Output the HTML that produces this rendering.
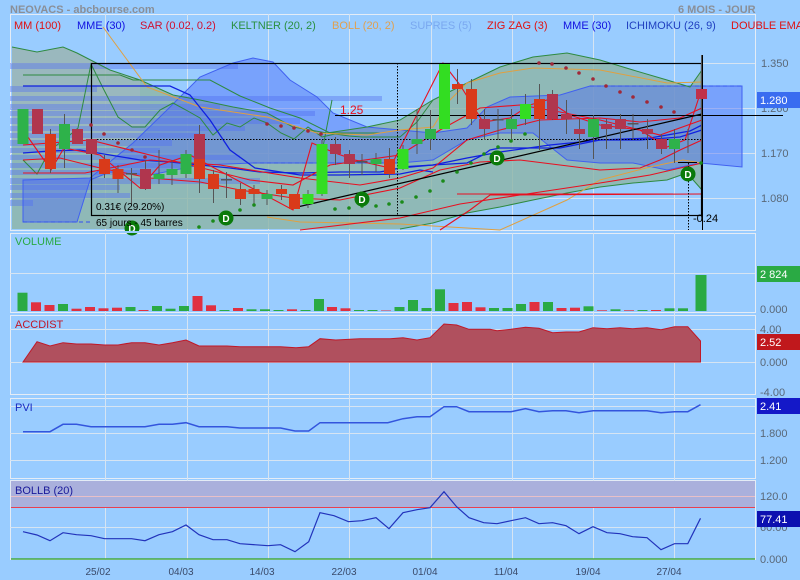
<!DOCTYPE html>
<html><head><meta charset="utf-8"><style>
html,body{margin:0;padding:0;background:#99ccff;}
svg{display:block;font-family:"Liberation Sans",sans-serif;}
</style></head><body>
<svg width="800" height="580" viewBox="0 0 800 580" xmlns="http://www.w3.org/2000/svg">
<rect width="800" height="580" fill="#99ccff"/>
<g fill="none" stroke="#e4ecf6" stroke-width="1">
<rect x="10.5" y="14.5" width="745" height="216"/>
<rect x="10.5" y="233.5" width="745" height="79"/>
<rect x="10.5" y="315.5" width="745" height="79"/>
<rect x="10.5" y="398.5" width="745" height="80"/>
<rect x="10.5" y="480.5" width="745" height="79"/>
</g>
<g stroke="#d6e4f2" stroke-width="1">
<line x1="10" y1="63.5" x2="755" y2="63.5"/><line x1="10" y1="108.5" x2="755" y2="108.5"/>
<line x1="10" y1="153.5" x2="755" y2="153.5"/><line x1="10" y1="198.5" x2="755" y2="198.5"/>
<line x1="10" y1="273.5" x2="755" y2="273.5"/>
<line x1="10" y1="329.5" x2="755" y2="329.5"/><line x1="10" y1="362.5" x2="755" y2="362.5"/>
<line x1="10" y1="406.5" x2="755" y2="406.5"/><line x1="10" y1="433.5" x2="755" y2="433.5"/><line x1="10" y1="460.5" x2="755" y2="460.5"/>
<line x1="10" y1="527.5" x2="755" y2="527.5"/>
<line x1="105.5" y1="14" x2="105.5" y2="560"/><line x1="187.5" y1="14" x2="187.5" y2="560"/>
<line x1="268.5" y1="14" x2="268.5" y2="560"/><line x1="349.5" y1="14" x2="349.5" y2="560"/>
<line x1="431.5" y1="14" x2="431.5" y2="560"/><line x1="512.5" y1="14" x2="512.5" y2="560"/>
<line x1="593.5" y1="14" x2="593.5" y2="560"/><line x1="674.5" y1="14" x2="674.5" y2="560"/>
</g>

<polygon fill="rgb(140,180,165)" fill-opacity="0.8" points="12,47 37,52 63,47 77,53 110,70 140,80 173,95 200,100 233,107 267,113 293,127 327,133 367,127 400,120 433,100 467,83 500,67 533,57 567,53 600,60 633,70 667,80 690,87 702,70 702,190 687,173 667,180 633,183 600,187 567,193 533,200 500,207 467,213 433,223 400,229 300,229 12,229"/>
<polygon fill="#a8b8c8" fill-opacity="0.45" points="12,47 37,52 63,47 77,53 110,70 140,80 140,140 12,140"/>
<g fill="#5a78ee" fill-opacity="0.45">
<rect x="10" y="63" width="228" height="6"/><rect x="10" y="86" width="87" height="6"/>
<rect x="10" y="96" width="372" height="5"/><rect x="10" y="104" width="210" height="6"/>
<rect x="10" y="111" width="305" height="5"/><rect x="10" y="118" width="290" height="6"/>
<rect x="10" y="126" width="235" height="5"/><rect x="10" y="133" width="190" height="5"/>
<rect x="10" y="140" width="162" height="6"/><rect x="10" y="148" width="150" height="5"/>
<rect x="10" y="155" width="230" height="5"/><rect x="10" y="163" width="170" height="5"/>
<rect x="10" y="170" width="135" height="5"/><rect x="10" y="178" width="250" height="6"/>
<rect x="10" y="185" width="110" height="5"/><rect x="10" y="193" width="120" height="5"/>
<rect x="10" y="200" width="23" height="6"/>
</g>
<polygon fill="#4a68f8" fill-opacity="0.42" stroke="#4060f0" stroke-width="1" points="90,178 133,143 167,110 200,77 233,63 253,58 273,62 290,80 317,97 333,113 367,127 400,130 433,133 467,128 487,107 510,97 560,95 590,86 742,86 742,167 700,163 667,170 633,163 600,163 567,160 533,133 500,133 467,140 433,160 400,163 253,163 200,165 150,175 110,172 90,180 77,222 23,222 23,180"/>
<line x1="590" y1="86" x2="742" y2="86" stroke="#3050f0" stroke-dasharray="4,3"/>
<line x1="23" y1="222" x2="90" y2="222" stroke="#3050f0" stroke-dasharray="4,3"/>
<line x1="253" y1="163" x2="400" y2="163" stroke="#3050f0" stroke-dasharray="4,3"/>

<g fill="none" stroke="#2e8a40" stroke-width="1">
<polyline points="12,47 37,52 63,47 77,53 110,70 140,80 173,95 200,100 233,107 267,113 293,127 327,133 367,127 400,120 433,100 467,83 500,67 533,57 567,53 600,60 633,70 667,80 690,87 702,70"/>
<polyline points="702,190 687,173 667,180 633,183 600,187 567,193 533,200 500,207 467,213 433,223 400,229"/>
<polyline points="23,160 37,174 50,150 64,140 78,128 91,64 104,90 118,117 132,127 145,127 160,110 173,103 186,110 200,118 213,135 227,123 240,127 254,118 267,123 281,133 294,139 308,127 322,137 335,134 349,136 362,137 375,137 400,137 417,122 433,100"/>
<polyline points="23,75 120,75 133,80 210,80 240,96 270,108 300,118 330,133 380,133"/>
<polyline points="322,152 332,100"/>
</g>
<g fill="none" stroke="#e0a040" stroke-width="1">
<polyline points="103,27 147,87 200,107 267,117 317,133 367,135 400,130 433,127 450,100 467,83 500,73 533,68 600,70 667,83 702,82"/>
<polyline points="267,217 300,222 400,224 500,230 567,200 600,180 650,167 683,160 702,163"/>
</g>
<g fill="none" stroke="#1020e0" stroke-width="1.3">
<polyline points="23,153 50,151 80,150 110,155 140,160 170,162 200,165 230,168 260,172 300,173 340,172 380,172 400,168 433,165 467,158 500,152 550,145 600,140 650,138 690,131 702,125"/>
<polyline points="23,86 170,86 190,95 210,120 230,150 255,168 300,175 340,175 400,174 420,170 433,172"/>
<polyline points="400,167 433,165 467,163 483,155 490,150 500,148 560,148 600,140 640,140 680,137 702,130"/>
</g>
<g fill="none" stroke="#e81020" stroke-width="1.1">
<polyline points="23,173 85,173 150,160 220,165 300,178 360,185 400,178 433,168 467,140 500,130 540,120 600,118 640,122 680,118 702,108"/>
<polyline points="23,130 51,170 64,148 100,155 140,188 160,165 190,155 293,210 312,143 335,153 355,160 390,168 443,63 460,85 483,122 510,118 530,105 547,100 570,115 600,125 640,130 667,147 685,140 702,88"/>
<polyline points="23,145 90,140 150,155 250,180 293,185 330,165 400,155 440,130 480,108 520,105 560,112 600,120 660,135 702,120"/>
<polyline points="457,194 673,194"/>
<polyline points="23,160 60,158 100,168 150,178 200,182 240,190 293,198 340,200 400,188 440,170 480,162 520,160 560,165 600,170 640,168 660,160 680,150 702,140"/>
<polyline points="300,230 400,218 460,204 520,195 600,183 650,175 702,163"/>
<polyline points="440,230 470,210 490,195 702,194"/>
</g>
<rect x="91.5" y="63.5" width="610" height="152" fill="none" stroke="#000" stroke-width="1.2"/>
<line x1="91" y1="139.5" x2="702" y2="139.5" stroke="#000" stroke-dasharray="1.5,1.5"/>
<line x1="397.5" y1="63" x2="397.5" y2="215" stroke="#000" stroke-dasharray="1.5,1.5"/>
<line x1="293" y1="208" x2="702" y2="114" stroke="#000" stroke-width="1.2"/>
<line x1="335" y1="115.5" x2="783" y2="115.5" stroke="#000" stroke-width="1"/>
<line x1="678" y1="162.5" x2="697" y2="162.5" stroke="#000"/>
<line x1="688.5" y1="163" x2="688.5" y2="230" stroke="#000" stroke-dasharray="1.5,1.5"/>
<line x1="702.5" y1="55" x2="702.5" y2="230" stroke="#000" stroke-width="1"/>

<g stroke="#555" stroke-width="1">
<line x1="50.5" y1="129" x2="50.5" y2="173"/><line x1="64.5" y1="114" x2="64.5" y2="168"/>
<line x1="104.5" y1="155" x2="104.5" y2="178"/><line x1="118" y1="165" x2="118" y2="193"/>
<line x1="131.5" y1="168" x2="131.5" y2="204"/><line x1="145.5" y1="160" x2="145.5" y2="190"/>
<line x1="159" y1="150" x2="159" y2="184"/><line x1="172" y1="160" x2="172" y2="185"/>
<line x1="186" y1="150" x2="186" y2="178"/><line x1="199.5" y1="125" x2="199.5" y2="193"/>
<line x1="213.5" y1="170" x2="213.5" y2="203"/><line x1="226.5" y1="172" x2="226.5" y2="198"/>
<line x1="240.5" y1="183" x2="240.5" y2="205"/><line x1="254" y1="185" x2="254" y2="205"/>
<line x1="267" y1="190" x2="267" y2="205"/><line x1="281.5" y1="185" x2="281.5" y2="200"/>
<line x1="308" y1="190" x2="308" y2="208"/><line x1="322" y1="140" x2="322" y2="196"/>
<line x1="335.5" y1="137" x2="335.5" y2="165"/><line x1="349.5" y1="150" x2="349.5" y2="178"/>
<line x1="362" y1="154" x2="362" y2="175"/><line x1="376" y1="153" x2="376" y2="172"/>
<line x1="389.5" y1="148" x2="389.5" y2="178"/><line x1="403" y1="145" x2="403" y2="170"/>
<line x1="417" y1="109" x2="417" y2="154"/><line x1="430.5" y1="110" x2="430.5" y2="150"/>
<line x1="457.5" y1="69" x2="457.5" y2="104"/><line x1="471.5" y1="79" x2="471.5" y2="125"/>
<line x1="484.5" y1="109" x2="484.5" y2="140"/><line x1="498" y1="109" x2="498" y2="140"/>
<line x1="511.5" y1="109" x2="511.5" y2="140"/><line x1="525.5" y1="94" x2="525.5" y2="125"/>
<line x1="539.5" y1="84" x2="539.5" y2="150"/><line x1="552.5" y1="90" x2="552.5" y2="120"/>
<line x1="566.5" y1="100" x2="566.5" y2="134"/><line x1="579.5" y1="119" x2="579.5" y2="149"/>
<line x1="593.5" y1="115" x2="593.5" y2="159"/><line x1="606.5" y1="119" x2="606.5" y2="149"/>
<line x1="620.5" y1="114" x2="620.5" y2="149"/><line x1="633" y1="114" x2="633" y2="140"/>
<line x1="647.5" y1="119" x2="647.5" y2="149"/><line x1="661.5" y1="134" x2="661.5" y2="154"/>
<line x1="674.5" y1="129" x2="674.5" y2="163"/><line x1="688" y1="129" x2="688" y2="153"/>
<line x1="701.5" y1="55" x2="701.5" y2="163"/>
</g>
<g stroke="none">
<rect x="17.5" y="109" width="11" height="35" fill="#2eb24a"/>
<rect x="32" y="109" width="11" height="25" fill="#b0364e"/>
<rect x="45" y="134" width="11" height="35" fill="#d93a1a"/>
<rect x="59" y="124" width="11" height="25" fill="#2eb24a"/>
<rect x="72" y="129" width="11" height="15" fill="#b0364e"/>
<rect x="86" y="139" width="11" height="15" fill="#b0364e"/>
<rect x="99" y="159" width="11" height="15" fill="#d93a1a"/>
<rect x="112.5" y="169" width="11" height="10" fill="#d93a1a"/>
<rect x="126" y="173" width="11" height="1.5" fill="#555"/>
<rect x="140" y="169" width="11" height="20" fill="#b0364e"/>
<rect x="153.5" y="174" width="11" height="5" fill="#2eb24a"/>
<rect x="166.5" y="169" width="11" height="6" fill="#2eb24a"/>
<rect x="180.5" y="154" width="11" height="20" fill="#2eb24a"/>
<rect x="194" y="134" width="11" height="25" fill="#b0364e"/>
<rect x="194" y="159" width="11" height="20" fill="#d93a1a"/>
<rect x="208" y="174" width="11" height="15" fill="#d93a1a"/>
<rect x="221" y="179" width="11" height="1.5" fill="#555"/>
<rect x="235" y="189" width="11" height="10" fill="#d93a1a"/>
<rect x="248.5" y="189" width="11" height="5" fill="#d93a1a"/>
<rect x="261.5" y="194" width="11" height="5" fill="#2eb24a"/>
<rect x="276" y="189" width="11" height="5" fill="#d93a1a"/>
<rect x="289" y="194" width="11" height="15" fill="#d93a1a"/>
<rect x="302.5" y="194" width="11" height="10" fill="#33dd22"/>
<rect x="316.5" y="144" width="11" height="50" fill="#33dd22"/>
<rect x="330" y="144" width="11" height="10" fill="#b0364e"/>
<rect x="344" y="154" width="11" height="10" fill="#b0364e"/>
<rect x="356.5" y="161" width="11" height="1.5" fill="#555"/>
<rect x="370.5" y="159" width="11" height="5" fill="#2eb24a"/>
<rect x="384" y="159" width="11" height="15" fill="#d93a1a"/>
<rect x="397.5" y="149" width="11" height="20" fill="#33dd22"/>
<rect x="411.5" y="139" width="11" height="5" fill="#2eb24a"/>
<rect x="425" y="129" width="11" height="10" fill="#2eb24a"/>
<rect x="439" y="64" width="11" height="65" fill="#33dd22"/>
<rect x="452" y="84" width="11" height="5" fill="#d93a1a"/>
<rect x="466" y="89" width="11" height="30" fill="#d93a1a"/>
<rect x="479" y="119" width="11" height="10" fill="#b0364e"/>
<rect x="492.5" y="119" width="11" height="1.5" fill="#555"/>
<rect x="506" y="119" width="11" height="10" fill="#2eb24a"/>
<rect x="520" y="104" width="11" height="15" fill="#33dd22"/>
<rect x="534" y="99" width="11" height="20" fill="#d93a1a"/>
<rect x="547" y="94" width="11" height="25" fill="#b0364e"/>
<rect x="561" y="114" width="11" height="5" fill="#b0364e"/>
<rect x="574" y="129" width="11" height="5" fill="#b0364e"/>
<rect x="588" y="119" width="11" height="18" fill="#2eb24a"/>
<rect x="601" y="124" width="11" height="5" fill="#b0364e"/>
<rect x="615" y="119" width="11" height="10" fill="#b0364e"/>
<rect x="627.5" y="123" width="11" height="1.5" fill="#555"/>
<rect x="642" y="129" width="11" height="5" fill="#b0364e"/>
<rect x="656" y="139" width="11" height="10" fill="#b0364e"/>
<rect x="669" y="139" width="11" height="10" fill="#2eb24a"/>
<rect x="696" y="89" width="11" height="10" fill="#c0304a"/>
</g>
<g fill="#a02838">
<circle cx="91" cy="125" r="1.8"/><circle cx="104" cy="134" r="1.8"/><circle cx="118" cy="143" r="1.8"/><circle cx="132" cy="150" r="1.8"/><circle cx="145" cy="157" r="1.8"/>
<circle cx="267" cy="124" r="1.8"/><circle cx="281" cy="126" r="1.8"/><circle cx="294" cy="128" r="1.8"/><circle cx="308" cy="131" r="1.8"/><circle cx="321" cy="134" r="1.8"/>
<circle cx="539" cy="63" r="1.8"/><circle cx="552" cy="64" r="1.8"/><circle cx="566" cy="68" r="1.8"/><circle cx="579" cy="73" r="1.8"/><circle cx="593" cy="79" r="1.8"/><circle cx="606" cy="86" r="1.8"/><circle cx="620" cy="92" r="1.8"/><circle cx="633" cy="97" r="1.8"/><circle cx="647" cy="102" r="1.8"/><circle cx="661" cy="107" r="1.8"/><circle cx="674" cy="112" r="1.8"/>
</g>
<g fill="#1a8a1a">
<circle cx="199" cy="227" r="1.8"/><circle cx="213" cy="221" r="1.8"/><circle cx="240" cy="210" r="1.8"/><circle cx="254" cy="205" r="1.8"/>
<circle cx="335" cy="209" r="1.8"/><circle cx="349" cy="208" r="1.8"/><circle cx="362" cy="206" r="1.8"/><circle cx="376" cy="206" r="1.8"/><circle cx="389" cy="204" r="1.8"/><circle cx="402" cy="202" r="1.8"/><circle cx="416" cy="197" r="1.8"/><circle cx="430" cy="191" r="1.8"/><circle cx="443" cy="181" r="1.8"/><circle cx="457" cy="172" r="1.8"/><circle cx="471" cy="163" r="1.8"/><circle cx="484" cy="154" r="1.8"/><circle cx="498" cy="147" r="1.8"/><circle cx="511" cy="141" r="1.8"/><circle cx="525" cy="134" r="1.8"/><circle cx="701" cy="163" r="1.8"/>
</g>
<g font-size="10" font-weight="bold" text-anchor="middle">
<circle cx="226" cy="218" r="7.5" fill="#0a7a0a"/><text x="226" y="222" fill="#fff">D</text>
<circle cx="132" cy="228" r="7.5" fill="#0a7a0a"/><text x="132" y="232" fill="#fff">D</text>
<circle cx="362" cy="199" r="7.5" fill="#0a7a0a"/><text x="362" y="203" fill="#fff">D</text>
<circle cx="497" cy="158" r="7.5" fill="#0a7a0a"/><text x="497" y="162" fill="#fff">D</text>
<circle cx="688" cy="174" r="7.5" fill="#0a7a0a"/><text x="688" y="178" fill="#fff">D</text>
</g>
<rect x="10" y="231" width="746" height="2" fill="#99ccff"/>
<text x="340" y="114" font-size="12" fill="#e81020">1.25</text>
<text x="96" y="210" font-size="10" fill="#000">0.31€ (29.20%)</text>
<text x="96" y="226" font-size="10" fill="#000">65 jours - 45 barres</text>
<text x="693" y="222" font-size="11" fill="#000">-0.24</text>

<text x="10" y="13" font-size="11" font-weight="bold" fill="#8a8f98">NEOVACS - abcbourse.com</text>
<text x="678" y="13" font-size="11" font-weight="bold" fill="#8a8f98">6 MOIS - JOUR</text>
<g font-size="11">
<text x="14" y="29" fill="#e01010">MM (100)</text>
<text x="77" y="29" fill="#1010e0">MME (30)</text>
<text x="140" y="29" fill="#d01030">SAR (0.02, 0.2)</text>
<text x="231" y="29" fill="#2a9040">KELTNER (20, 2)</text>
<text x="332" y="29" fill="#e0a050">BOLL (20, 2)</text>
<text x="410" y="29" fill="#7aa8f0">SUPRES (5)</text>
<text x="487" y="29" fill="#e01010">ZIG ZAG (3)</text>
<text x="563" y="29" fill="#1010e0">MME (30)</text>
<text x="626" y="29" fill="#2040c0">ICHIMOKU (26, 9)</text>
<text x="731" y="29" fill="#e01010">DOUBLE EMA</text>
</g>
<g font-size="11" fill="#5a6878">
<text x="761" y="67">1.350</text><text x="761" y="112">1.260</text>
<text x="761" y="157">1.170</text><text x="761" y="202">1.080</text>
<text x="760" y="313">0.000</text>
<text x="760" y="333">4.00</text><text x="760" y="366">0.000</text><text x="760" y="396">-4.00</text>
<text x="760" y="437">1.800</text><text x="760" y="464">1.200</text>
<text x="760" y="500">120.0</text><text x="760" y="531">60.00</text><text x="760" y="563">0.000</text>
</g>
<rect x="757" y="92" width="43" height="16" fill="#3a6cf0"/><text x="760" y="104" font-size="11" fill="#fff">1.280</text>
<rect x="757" y="266" width="43" height="16" fill="#2aaa44"/><text x="760" y="278" font-size="11" fill="#fff">2 824</text>
<rect x="757" y="334" width="43" height="16" fill="#c0181c"/><text x="760" y="346" font-size="11" fill="#fff">2.52</text>
<rect x="757" y="398" width="43" height="16" fill="#1418c8"/><text x="760" y="410" font-size="11" fill="#fff">2.41</text>
<rect x="757" y="511" width="43" height="16" fill="#0c10b0"/><text x="760" y="523" font-size="11" fill="#fff">77.41</text>

<text x="15" y="245" font-size="11" fill="#2aaa44">VOLUME</text>
<g>
<rect x="17.5" y="292.7" width="10" height="18.3" fill="#2aaa44"/>
<rect x="31" y="302.3" width="10" height="8.7" fill="#e03040"/>
<rect x="44.5" y="305" width="10" height="6" fill="#e03040"/>
<rect x="58" y="304" width="10" height="7" fill="#2aaa44"/>
<rect x="71.5" y="308.7" width="10" height="2.3" fill="#e03040"/>
<rect x="85" y="307" width="10" height="4" fill="#e03040"/>
<rect x="98.5" y="308.3" width="10" height="2.7" fill="#e03040"/>
<rect x="112" y="307.7" width="10" height="3.3" fill="#e03040"/>
<rect x="125.5" y="307" width="10" height="4" fill="#2aaa44"/>
<rect x="138.5" y="310" width="10" height="1" fill="#e03040"/>
<rect x="152" y="306" width="10" height="5" fill="#2aaa44"/>
<rect x="165.5" y="308.7" width="10" height="2.3" fill="#2aaa44"/>
<rect x="179" y="306" width="10" height="5" fill="#2aaa44"/>
<rect x="192.5" y="296" width="10" height="15" fill="#e03040"/>
<rect x="206" y="305.3" width="10" height="5.7" fill="#e03040"/>
<rect x="219.5" y="310" width="10" height="1" fill="#2aaa44"/>
<rect x="233" y="308" width="10" height="3" fill="#e03040"/>
<rect x="246.5" y="309.3" width="10" height="1.7" fill="#2aaa44"/>
<rect x="260" y="309.3" width="10" height="1.7" fill="#2aaa44"/>
<rect x="273.5" y="310" width="10" height="1" fill="#2aaa44"/>
<rect x="287" y="309.3" width="10" height="1.7" fill="#e03040"/>
<rect x="300.5" y="310" width="10" height="1" fill="#2aaa44"/>
<rect x="314" y="299" width="10" height="12" fill="#2aaa44"/>
<rect x="327" y="307" width="10" height="4" fill="#e03040"/>
<rect x="340.5" y="308.3" width="10" height="2.7" fill="#e03040"/>
<rect x="354" y="310" width="10" height="1" fill="#2aaa44"/>
<rect x="367.5" y="310" width="10" height="1" fill="#2aaa44"/>
<rect x="381" y="310.5" width="10" height="0.5" fill="#e03040"/>
<rect x="394.5" y="307" width="10" height="4" fill="#2aaa44"/>
<rect x="408" y="300" width="10" height="11" fill="#2aaa44"/>
<rect x="421.5" y="308" width="10" height="3" fill="#2aaa44"/>
<rect x="435" y="289.3" width="10" height="21.7" fill="#2aaa44"/>
<rect x="448.5" y="303" width="10" height="8" fill="#e03040"/>
<rect x="462" y="302" width="10" height="9" fill="#e03040"/>
<rect x="475.5" y="307.3" width="10" height="3.7" fill="#e03040"/>
<rect x="489" y="308" width="10" height="3" fill="#2aaa44"/>
<rect x="502.5" y="308" width="10" height="3" fill="#2aaa44"/>
<rect x="516" y="304" width="10" height="7" fill="#2aaa44"/>
<rect x="529.5" y="302" width="10" height="9" fill="#e03040"/>
<rect x="543" y="302" width="10" height="9" fill="#2aaa44"/>
<rect x="556.5" y="308" width="10" height="3" fill="#e03040"/>
<rect x="570" y="307.7" width="10" height="3.3" fill="#e03040"/>
<rect x="583.5" y="306.3" width="10" height="4.7" fill="#2aaa44"/>
<rect x="597" y="310.3" width="10" height="0.7" fill="#e03040"/>
<rect x="610.5" y="309.3" width="10" height="1.7" fill="#2aaa44"/>
<rect x="624" y="310.3" width="10" height="0.7" fill="#e03040"/>
<rect x="637.5" y="310" width="10" height="1" fill="#2aaa44"/>
<rect x="651" y="310" width="10" height="1" fill="#e03040"/>
<rect x="664.5" y="308.3" width="10" height="2.7" fill="#2aaa44"/>
<rect x="678" y="308.3" width="10" height="2.7" fill="#2aaa44"/>
<rect x="695.5" y="275" width="11" height="36" fill="#2aaa44"/>
</g>

<polygon fill="#b0505e" stroke="#c01828" stroke-width="1" points="23,362 37,341.7 50,346 63,342.7 76.5,344 91,344 104.6,345 118,345 131.6,342.7 145,342.7 159,345 172.4,342.7 186,340 199,346 227,346 240,346.7 280.6,346.7 296,347.7 308.7,346.7 320,338.7 335.7,340 359.7,338.7 390,338.7 403,337.7 417,340 430,337.7 444,324 456.6,325 469,329.3 490,329.3 497,330.7 511,329.3 525.5,327.3 539,328.3 552.6,332.7 566,332 579,332 593,327.7 607,328.7 620,327.7 632.6,328.7 647,327.7 661,329.7 674.5,326.7 687.8,326.7 700.5,341 700.5,362"/>
<text x="15" y="328" font-size="11" fill="#c01828">ACCDIST</text>

<polyline fill="none" stroke="#3355dd" stroke-width="1.5" points="23,431.7 50,431.7 63,424.3 76.5,424.3 91,426.7 145,426.7 159,424.3 172.4,424.3 186,422.7 199,426.7 227,426.7 240,428 280.6,428 295,431 308.7,431 320,422.7 387.8,422.7 403,418.7 417,416.7 430,416.7 444,406.7 456.6,406.7 469,411.7 511,411.7 525.5,408.7 539,411.7 552.6,410.7 566,410.7 579,412.7 593,410.7 647,410.7 661,412.7 674.5,411.7 687.8,411.7 700.5,404.7"/>
<text x="15" y="411" font-size="11" fill="#1a2ac0">PVI</text>

<rect x="11" y="481" width="744" height="26" fill="#aab0dc"/>
<line x1="11" y1="496.5" x2="755" y2="496.5" stroke="#e8c0c8"/>
<line x1="11" y1="507.5" x2="755" y2="507.5" stroke="#e84050" stroke-width="1"/>
<line x1="11" y1="559" x2="755" y2="559" stroke="#44aa44" stroke-width="1.5"/>
<polyline fill="none" stroke="#2233bb" stroke-width="1.2" points="23,531.7 37,535 50,540.7 63,532.7 76.5,534.7 91,535.7 104.6,538.7 131.6,538.7 145,540.7 159,534.7 172.4,531.7 186,525 199,534.7 213,539.7 227,539.7 240,543.7 268,545.7 280.6,544.7 295,551.7 308.7,541.7 320,512.7 334,515.7 348.5,521.7 362,520.7 376,517.7 389,528.7 403,512.7 417,509.7 430,507.7 444,491.7 456.6,506.7 469,517.7 483.7,522.7 497,523.7 511,520.7 525.5,517.7 539,523.7 552.6,522.7 566,525.7 579,533.7 593,526.7 607,532.7 620,533.7 632.6,536.7 647,537.7 661,549.7 674.5,543.7 687.8,543.7 700.5,518.3"/>
<text x="15" y="494" font-size="11" fill="#1a1a9a">BOLLB (20)</text>

<g font-size="10" fill="#3a4a6a" text-anchor="middle">
<text x="98" y="575">25/02</text><text x="181" y="575">04/03</text><text x="262" y="575">14/03</text>
<text x="344" y="575">22/03</text><text x="425" y="575">01/04</text><text x="506" y="575">11/04</text>
<text x="588" y="575">19/04</text><text x="669" y="575">27/04</text>
</g>
</svg>
</body></html>
